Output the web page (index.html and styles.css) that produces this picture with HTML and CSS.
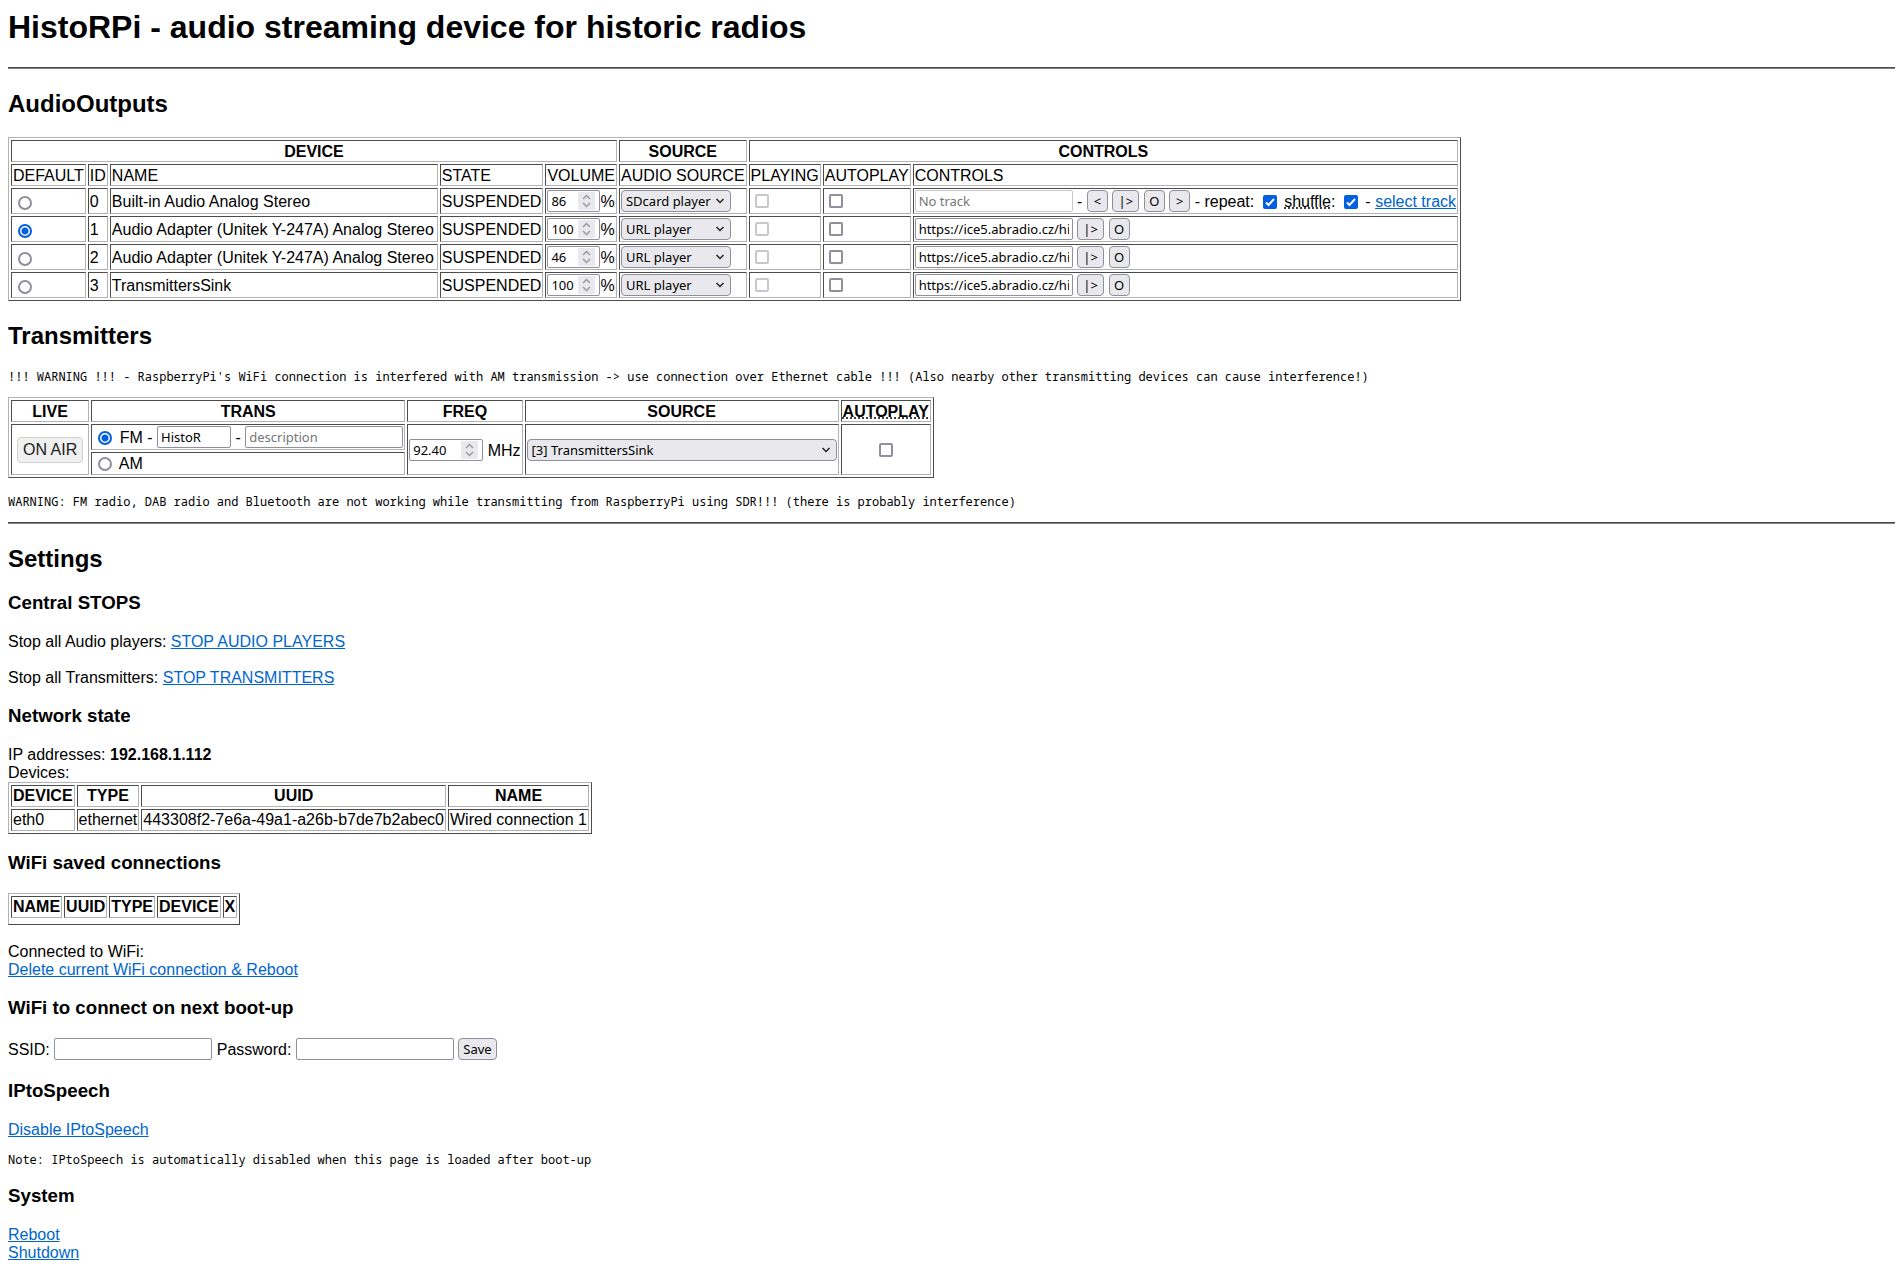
FILE: index.html
```html
<!DOCTYPE html>
<html lang="en">
<head>
<meta charset="utf-8">
<title>HistoRPi</title>
<link rel="stylesheet" href="styles.css">
</head>
<body>
<h1>HistoRPi - audio streaming device for historic radios</h1>
<hr>

<h2>AudioOutputs</h2>
<table class="panel">
  <tr><th colspan="5">DEVICE</th><th>SOURCE</th><th colspan="3">CONTROLS</th></tr>
  <tr><td>DEFAULT</td><td>ID</td><td class="name">NAME</td><td>STATE</td><td>VOLUME</td><td>AUDIO SOURCE</td><td>PLAYING</td><td>AUTOPLAY</td><td>CONTROLS</td></tr>
  <tr class="device">
    <td class="field"><input type="radio" name="default" aria-label="Default device 0"></td>
    <td>0</td><td>Built-in Audio Analog Stereo</td><td>SUSPENDED</td>
    <td class="field"><input class="volume" type="number" value="86" aria-label="Volume 0">%</td>
    <td class="field"><select class="player" aria-label="Audio source 0"><option>SDcard player</option><option>URL player</option></select></td>
    <td class="field"><input type="checkbox" disabled aria-label="Playing 0"></td>
    <td class="field"><input type="checkbox" aria-label="Autoplay 0"></td>
    <td class="field"><input class="wide" type="text" placeholder="No track" disabled aria-label="Track"> - <button type="button">&lt;</button> <button class="play" type="button">|&gt;</button> <button type="button">O</button> <button type="button">&gt;</button> - <label for="repeat">repeat:</label> <input id="repeat" type="checkbox" checked> <label for="shuffle"><abbr title="Play tracks in random order">shuffle</abbr>:</label> <input id="shuffle" type="checkbox" checked> - <a href="#tracks">select track</a></td>
  </tr>
  <tr class="device">
    <td class="field"><input type="radio" name="default" checked aria-label="Default device 1"></td>
    <td>1</td><td>Audio Adapter (Unitek Y-247A) Analog Stereo</td><td>SUSPENDED</td>
    <td class="field"><input class="volume" type="number" value="100" aria-label="Volume 1">%</td>
    <td class="field"><select class="player" aria-label="Audio source 1"><option>URL player</option><option>SDcard player</option></select></td>
    <td class="field"><input type="checkbox" disabled aria-label="Playing 1"></td>
    <td class="field"><input type="checkbox" aria-label="Autoplay 1"></td>
    <td class="field"><input class="wide" type="text" value="https://ice5.abradio.cz/hitvysocina128.mp3" aria-label="URL 1"> <button class="play" type="button">|&gt;</button> <button type="button">O</button></td>
  </tr>
  <tr class="device">
    <td class="field"><input type="radio" name="default" aria-label="Default device 2"></td>
    <td>2</td><td>Audio Adapter (Unitek Y-247A) Analog Stereo</td><td>SUSPENDED</td>
    <td class="field"><input class="volume" type="number" value="46" aria-label="Volume 2">%</td>
    <td class="field"><select class="player" aria-label="Audio source 2"><option>URL player</option><option>SDcard player</option></select></td>
    <td class="field"><input type="checkbox" disabled aria-label="Playing 2"></td>
    <td class="field"><input type="checkbox" aria-label="Autoplay 2"></td>
    <td class="field"><input class="wide" type="text" value="https://ice5.abradio.cz/hitvysocina128.mp3" aria-label="URL 2"> <button class="play" type="button">|&gt;</button> <button type="button">O</button></td>
  </tr>
  <tr class="device">
    <td class="field"><input type="radio" name="default" aria-label="Default device 3"></td>
    <td>3</td><td>TransmittersSink</td><td>SUSPENDED</td>
    <td class="field"><input class="volume" type="number" value="100" aria-label="Volume 3">%</td>
    <td class="field"><select class="player" aria-label="Audio source 3"><option>URL player</option><option>SDcard player</option></select></td>
    <td class="field"><input type="checkbox" disabled aria-label="Playing 3"></td>
    <td class="field"><input type="checkbox" aria-label="Autoplay 3"></td>
    <td class="field"><input class="wide" type="text" value="https://ice5.abradio.cz/hitvysocina128.mp3" aria-label="URL 3"> <button class="play" type="button">|&gt;</button> <button type="button">O</button></td>
  </tr>
</table>

<h2>Transmitters</h2>
<pre>!!! WARNING !!! - RaspberryPi's WiFi connection is interfered with AM transmission -&gt; use connection over Ethernet cable !!! (Also nearby other transmitting devices can cause interference!)</pre>
<table class="panel">
  <tr><th>LIVE</th><th>TRANS</th><th>FREQ</th><th>SOURCE</th><th><abbr title="Start transmitting after boot-up">AUTOPLAY</abbr></th></tr>
  <tr>
    <td rowspan="2" class="live"><button class="on-air" type="button" disabled>ON AIR</button></td>
    <td class="field"><input id="fm" type="radio" name="band" checked> <label for="fm">FM</label> - <input class="short" type="text" value="HistoR" aria-label="Station name"> - <input class="wide" type="text" placeholder="description" aria-label="Description"></td>
    <td rowspan="2" class="field"><input id="freq" class="short" type="number" value="92.40" step="0.1"> <label for="freq">MHz</label></td>
    <td rowspan="2" class="field"><select class="sink" aria-label="Source"><option>[3] TransmittersSink</option></select></td>
    <td rowspan="2" class="field center"><input type="checkbox" aria-label="Autoplay transmitter"></td>
  </tr>
  <tr><td class="field am"><input id="am" type="radio" name="band"> <label for="am">AM</label></td></tr>
</table>
<pre class="after-table">WARNING: FM radio, DAB radio and Bluetooth are not working while transmitting from RaspberryPi using SDR!!! (there is probably interference)</pre>
<hr>

<h2>Settings</h2>
<h3>Central STOPS</h3>
<p>Stop all Audio players: <a href="#stop-players">STOP AUDIO PLAYERS</a></p>
<p>Stop all Transmitters: <a href="#stop-transmitters">STOP TRANSMITTERS</a></p>

<h3>Network state</h3>
<div>IP addresses: <b>192.168.1.112</b></div>
<div>Devices:</div>
<table>
  <tr><th>DEVICE</th><th>TYPE</th><th>UUID</th><th>NAME</th></tr>
  <tr><td>eth0</td><td>ethernet</td><td>443308f2-7e6a-49a1-a26b-b7de7b2abec0</td><td>Wired connection 1</td></tr>
</table>

<h3>WiFi saved connections</h3>
<table class="saved">
  <tr><th>NAME</th><th>UUID</th><th>TYPE</th><th>DEVICE</th><th>X</th></tr>
</table>
<p>Connected to WiFi:<br><a href="#delete-wifi">Delete current WiFi connection &amp; Reboot</a></p>

<h3>WiFi to connect on next boot-up</h3>
<form><label for="ssid">SSID:</label> <input id="ssid" class="wide" type="text"> <label for="password">Password:</label> <input id="password" class="wide" type="password"> <button type="button">Save</button></form>

<h3>IPtoSpeech</h3>
<div><a href="#disable-speech">Disable IPtoSpeech</a></div>
<pre>Note: IPtoSpeech is automatically disabled when this page is loaded after boot-up</pre>

<h3>System</h3>
<div><a href="#reboot">Reboot</a><br><a href="#shutdown">Shutdown</a></div>
</body>
</html>
```
FILE: styles.css
```css
body {
  margin: 8px;
  background: #fff;
  color: #000;
  font: 16px/18px "Liberation Sans", Arial, sans-serif;
}

h1 { margin: 0 0 21px; line-height: 38px; }
h2 { margin: 21px 0 19px; line-height: 28px; }
h3 { margin: 18px 0 19px; line-height: 22px; }
p { margin: 18px 0; }
form { margin-bottom: 20px; }

hr {
  margin: 0;
  height: 1px;
  border: 0;
  border-top: 1px solid #4c4c4c;
  background: #808080;
}

pre {
  margin: 13px 0;
  font: 12px/15px "Noto Sans Mono", "DejaVu Sans Mono", monospace;
}

.after-table { margin-top: 16px; }

a { color: #0066cc; }
abbr { text-decoration: underline dotted; }

/* Raised table frame with sunken cells */
table {
  border: 1px solid;
  border-color: #b2b2b2 #4c4c4c #4c4c4c #b2b2b2;
  border-collapse: separate;
  border-spacing: 2px;
}

th, td {
  padding: 1px;
  border: 1px solid;
  border-color: #4c4c4c #b2b2b2 #b2b2b2 #4c4c4c;
  white-space: nowrap;
}

.panel th, .panel td { padding: 2px 1px 0; }
.panel .field { padding: 1px; }
.panel .live { padding: 1px 5px; }
.device td { height: 22px; }
.name { min-width: 324px; }
.am { height: 19px; }
.center { text-align: center; }
.saved { padding-bottom: 4px; }

/* Form controls */
input, select, button {
  appearance: none;
  box-sizing: border-box;
  height: 22px;
  margin: 0;
  border: 1px solid #8f8f9d;
  color: #000;
  font: 13px/18px "Noto Sans", sans-serif;
  vertical-align: 1px;
}

input {
  padding: 0 3px;
  border-radius: 2px;
  background: #fff;
}

input::placeholder { color: #757575; }
input:disabled { border-color: #c7c7ce; }

.wide { width: 158px; }
.short { width: 74px; }
.volume { width: 53px; }

input[type="number"] { padding-right: 4px; }

input[type="number"]::-webkit-inner-spin-button {
  appearance: none;
  width: 17px;
  height: 18px;
  opacity: 1;
  background: #e9e9ed url("data:image/svg+xml,%3Csvg xmlns='http://www.w3.org/2000/svg' width='17' height='18' fill='none' stroke='%239a9aa6' stroke-width='1.5'%3E%3Cpath d='M5 7l3.500-3.500L12 7M5 11l3.500 3.500L12 11'/%3E%3C/svg%3E") center no-repeat;
}

select {
  padding: 0 15px 0 4px;
  border-radius: 4px;
  background: #e9e9ed url("data:image/svg+xml,%3Csvg xmlns='http://www.w3.org/2000/svg' width='10' height='6' fill='none' stroke='%23222' stroke-width='1.5'%3E%3Cpath d='M1.5 1l3.5 3.5L8.500 1'/%3E%3C/svg%3E") right 5px center no-repeat;
}

.player { width: 110px; }
.sink { width: 310px; }

button {
  min-width: 21px;
  padding: 0 4px;
  border-radius: 4px;
  background: #e9e9ed;
}

.play { width: 27px; }

.on-air {
  height: 26px;
  padding: 0 5px;
  border-color: #d0d0d0;
  background: #f0f0f0;
  color: #222;
  font: 16px/18px "Liberation Sans", Arial, sans-serif;
}

input[type="checkbox"], input[type="radio"] {
  width: 14px;
  height: 14px;
  padding: 0;
  border-width: 2px;
  vertical-align: -2px;
}

input[type="checkbox"] { margin: 0 3px 0 4px; }

input[type="radio"] {
  margin: 0 3px 0 5px;
  border-radius: 50%;
}

.device input[type="radio"] { vertical-align: -4px; }

input[type="checkbox"]:checked {
  border: 0;
  background: #0060df url("data:image/svg+xml,%3Csvg xmlns='http://www.w3.org/2000/svg' width='14' height='14' fill='none' stroke='%23fff' stroke-width='2'%3E%3Cpath d='M3 7.500l2.500 2.500L11 4'/%3E%3C/svg%3E") center no-repeat;
}

input[type="radio"]:checked {
  border-color: #0060df;
  background: radial-gradient(circle, #0060df 3px, #fff 4px);
}
```
